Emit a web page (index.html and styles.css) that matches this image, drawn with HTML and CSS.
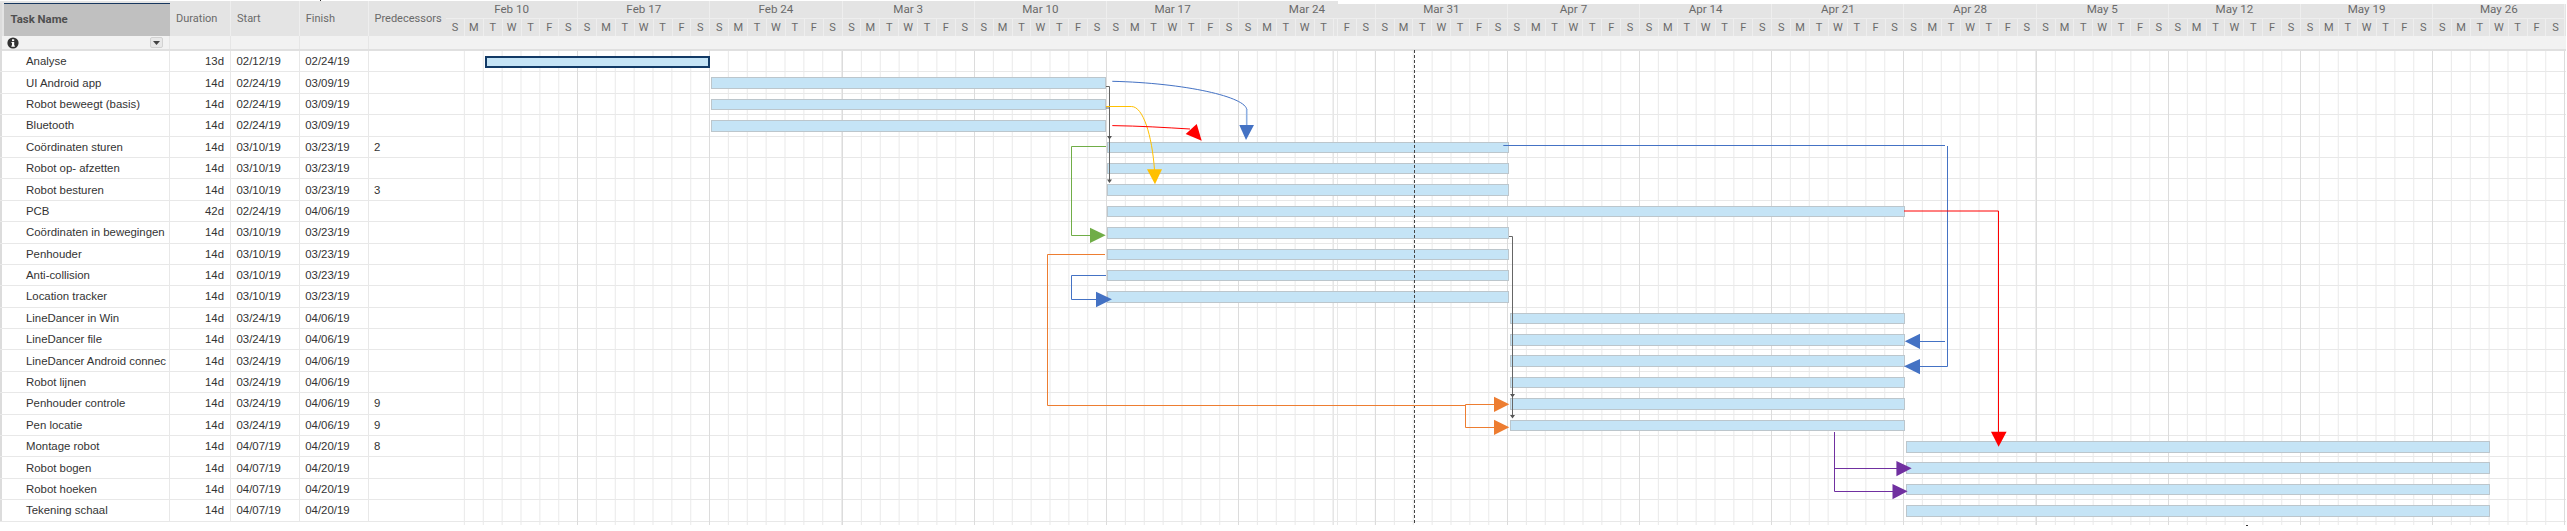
FILE: index.html
```html
<!DOCTYPE html>
<html lang="en">
<head>
<meta charset="utf-8">
<title>Gantt</title>
<link rel="stylesheet" href="styles.css">
</head>
<body>
<div class="gantt">
  <div class="head">
    <div class="hc c-task">Task Name</div>
    <div class="hc c-dur">Duration</div>
    <div class="hc c-date">Start</div>
    <div class="hc c-date">Finish</div>
    <div class="hc c-pred">Predecessors</div>
    <div class="weeks">
      <div class="week"><div class="month">Feb 10</div><div class="days"><span>S</span><span>M</span><span>T</span><span>W</span><span>T</span><span>F</span><span>S</span></div></div>
      <div class="week"><div class="month">Feb 17</div><div class="days"><span>S</span><span>M</span><span>T</span><span>W</span><span>T</span><span>F</span><span>S</span></div></div>
      <div class="week"><div class="month">Feb 24</div><div class="days"><span>S</span><span>M</span><span>T</span><span>W</span><span>T</span><span>F</span><span>S</span></div></div>
      <div class="week"><div class="month">Mar 3</div><div class="days"><span>S</span><span>M</span><span>T</span><span>W</span><span>T</span><span>F</span><span>S</span></div></div>
      <div class="week"><div class="month">Mar 10</div><div class="days"><span>S</span><span>M</span><span>T</span><span>W</span><span>T</span><span>F</span><span>S</span></div></div>
      <div class="week"><div class="month">Mar 17</div><div class="days"><span>S</span><span>M</span><span>T</span><span>W</span><span>T</span><span>F</span><span>S</span></div></div>
      <div class="week week-wide"><div class="month">Mar 24</div><div class="days"><span>S</span><span>M</span><span>T</span><span>W</span><span>T</span><span class="sliver"></span><span>F</span><span>S</span></div></div>
      <div class="week"><div class="month">Mar 31</div><div class="days"><span>S</span><span>M</span><span>T</span><span>W</span><span>T</span><span>F</span><span>S</span></div></div>
      <div class="week"><div class="month">Apr 7</div><div class="days"><span>S</span><span>M</span><span>T</span><span>W</span><span>T</span><span>F</span><span>S</span></div></div>
      <div class="week"><div class="month">Apr 14</div><div class="days"><span>S</span><span>M</span><span>T</span><span>W</span><span>T</span><span>F</span><span>S</span></div></div>
      <div class="week"><div class="month">Apr 21</div><div class="days"><span>S</span><span>M</span><span>T</span><span>W</span><span>T</span><span>F</span><span>S</span></div></div>
      <div class="week"><div class="month">Apr 28</div><div class="days"><span>S</span><span>M</span><span>T</span><span>W</span><span>T</span><span>F</span><span>S</span></div></div>
      <div class="week"><div class="month">May 5</div><div class="days"><span>S</span><span>M</span><span>T</span><span>W</span><span>T</span><span>F</span><span>S</span></div></div>
      <div class="week"><div class="month">May 12</div><div class="days"><span>S</span><span>M</span><span>T</span><span>W</span><span>T</span><span>F</span><span>S</span></div></div>
      <div class="week"><div class="month">May 19</div><div class="days"><span>S</span><span>M</span><span>T</span><span>W</span><span>T</span><span>F</span><span>S</span></div></div>
      <div class="week"><div class="month">May 26</div><div class="days"><span>S</span><span>M</span><span>T</span><span>W</span><span>T</span><span>F</span><span>S</span></div></div>
    </div>
  </div>
  <div class="top-mask"></div>

  <div class="filter">
    <div class="fc c-task">
      <svg class="info" width="12" height="12" viewBox="0 0 12 12"><circle cx="6" cy="6" r="5.6" fill="#333"/><rect x="5" y="5" width="2.2" height="4.4" fill="#fff"/><rect x="4.2" y="8.6" width="3.8" height="1" fill="#fff"/><rect x="4.4" y="5" width="1" height="0.9" fill="#fff"/><rect x="5" y="2.3" width="2.2" height="1.8" fill="#fff"/></svg>
      <span class="dd"><svg width="7" height="4" viewBox="0 0 7 4"><path d="M0 0H7L3.5 4Z" fill="#444"/></svg></span>
    </div>
    <div class="fc c-dur"></div>
    <div class="fc c-date"></div>
    <div class="fc c-date"></div>
    <div class="fc c-pred"></div>
  </div>

  <div class="rows">
    <div class="grid">
      <div class="gw"></div><div class="gw"></div><div class="gw"></div><div class="gw"></div><div class="gw"></div><div class="gw"></div>
      <div class="gw gw-a"></div><div class="gw gw-s"></div><div class="gw gw-b"></div>
      <div class="gw"></div><div class="gw"></div><div class="gw"></div><div class="gw"></div><div class="gw"></div><div class="gw"></div><div class="gw"></div><div class="gw"></div><div class="gw"></div>
    </div>

    <div class="row"><div class="cell c-task">Analyse</div><div class="cell c-dur">13d</div><div class="cell c-date">02/12/19</div><div class="cell c-date">02/24/19</div><div class="cell c-pred"></div><div class="track"><div class="bar bar-sel" style="left:38.7px;width:225.8px"></div></div></div>
    <div class="row"><div class="cell c-task">UI Android app</div><div class="cell c-dur">14d</div><div class="cell c-date">02/24/19</div><div class="cell c-date">03/09/19</div><div class="cell c-pred"></div><div class="track"><div class="bar" style="left:264.7px;width:395.5px"></div></div></div>
    <div class="row"><div class="cell c-task">Robot beweegt (basis)</div><div class="cell c-dur">14d</div><div class="cell c-date">02/24/19</div><div class="cell c-date">03/09/19</div><div class="cell c-pred"></div><div class="track"><div class="bar" style="left:264.7px;width:395.5px"></div></div></div>
    <div class="row"><div class="cell c-task">Bluetooth</div><div class="cell c-dur">14d</div><div class="cell c-date">02/24/19</div><div class="cell c-date">03/09/19</div><div class="cell c-pred"></div><div class="track"><div class="bar" style="left:264.7px;width:395.5px"></div></div></div>
    <div class="row"><div class="cell c-task">Coördinaten sturen</div><div class="cell c-dur">14d</div><div class="cell c-date">03/10/19</div><div class="cell c-date">03/23/19</div><div class="cell c-pred">2</div><div class="track"><div class="bar" style="left:660.5px;width:402.2px"></div></div></div>
    <div class="row"><div class="cell c-task">Robot op- afzetten</div><div class="cell c-dur">14d</div><div class="cell c-date">03/10/19</div><div class="cell c-date">03/23/19</div><div class="cell c-pred"></div><div class="track"><div class="bar" style="left:660.5px;width:402.2px"></div></div></div>
    <div class="row"><div class="cell c-task">Robot besturen</div><div class="cell c-dur">14d</div><div class="cell c-date">03/10/19</div><div class="cell c-date">03/23/19</div><div class="cell c-pred">3</div><div class="track"><div class="bar" style="left:660.5px;width:402.2px"></div></div></div>
    <div class="row"><div class="cell c-task">PCB</div><div class="cell c-dur">42d</div><div class="cell c-date">02/24/19</div><div class="cell c-date">04/06/19</div><div class="cell c-pred"></div><div class="track"><div class="bar" style="left:660.5px;width:798.3px"></div></div></div>
    <div class="row"><div class="cell c-task">Coördinaten in bewegingen</div><div class="cell c-dur">14d</div><div class="cell c-date">03/10/19</div><div class="cell c-date">03/23/19</div><div class="cell c-pred"></div><div class="track"><div class="bar" style="left:660.5px;width:402.2px"></div></div></div>
    <div class="row"><div class="cell c-task">Penhouder</div><div class="cell c-dur">14d</div><div class="cell c-date">03/10/19</div><div class="cell c-date">03/23/19</div><div class="cell c-pred"></div><div class="track"><div class="bar" style="left:660.5px;width:402.2px"></div></div></div>
    <div class="row"><div class="cell c-task">Anti-collision</div><div class="cell c-dur">14d</div><div class="cell c-date">03/10/19</div><div class="cell c-date">03/23/19</div><div class="cell c-pred"></div><div class="track"><div class="bar" style="left:660.5px;width:402.2px"></div></div></div>
    <div class="row"><div class="cell c-task">Location tracker</div><div class="cell c-dur">14d</div><div class="cell c-date">03/10/19</div><div class="cell c-date">03/23/19</div><div class="cell c-pred"></div><div class="track"><div class="bar" style="left:660.5px;width:402.2px"></div></div></div>
    <div class="row"><div class="cell c-task">LineDancer in Win</div><div class="cell c-dur">14d</div><div class="cell c-date">03/24/19</div><div class="cell c-date">04/06/19</div><div class="cell c-pred"></div><div class="track"><div class="bar" style="left:1063.5px;width:395.3px"></div></div></div>
    <div class="row"><div class="cell c-task">LineDancer file</div><div class="cell c-dur">14d</div><div class="cell c-date">03/24/19</div><div class="cell c-date">04/06/19</div><div class="cell c-pred"></div><div class="track"><div class="bar" style="left:1063.5px;width:395.3px"></div></div></div>
    <div class="row"><div class="cell c-task">LineDancer Android connec</div><div class="cell c-dur">14d</div><div class="cell c-date">03/24/19</div><div class="cell c-date">04/06/19</div><div class="cell c-pred"></div><div class="track"><div class="bar" style="left:1063.5px;width:395.3px"></div></div></div>
    <div class="row"><div class="cell c-task">Robot lijnen</div><div class="cell c-dur">14d</div><div class="cell c-date">03/24/19</div><div class="cell c-date">04/06/19</div><div class="cell c-pred"></div><div class="track"><div class="bar" style="left:1063.5px;width:395.3px"></div></div></div>
    <div class="row"><div class="cell c-task">Penhouder controle</div><div class="cell c-dur">14d</div><div class="cell c-date">03/24/19</div><div class="cell c-date">04/06/19</div><div class="cell c-pred">9</div><div class="track"><div class="bar" style="left:1063.5px;width:395.3px"></div></div></div>
    <div class="row"><div class="cell c-task">Pen locatie</div><div class="cell c-dur">14d</div><div class="cell c-date">03/24/19</div><div class="cell c-date">04/06/19</div><div class="cell c-pred">9</div><div class="track"><div class="bar" style="left:1063.5px;width:395.3px"></div></div></div>
    <div class="row"><div class="cell c-task">Montage robot</div><div class="cell c-dur">14d</div><div class="cell c-date">04/07/19</div><div class="cell c-date">04/20/19</div><div class="cell c-pred">8</div><div class="track"><div class="bar" style="left:1459.5px;width:584.5px"></div></div></div>
    <div class="row"><div class="cell c-task">Robot bogen</div><div class="cell c-dur">14d</div><div class="cell c-date">04/07/19</div><div class="cell c-date">04/20/19</div><div class="cell c-pred"></div><div class="track"><div class="bar" style="left:1459.5px;width:584.5px"></div></div></div>
    <div class="row"><div class="cell c-task">Robot hoeken</div><div class="cell c-dur">14d</div><div class="cell c-date">04/07/19</div><div class="cell c-date">04/20/19</div><div class="cell c-pred"></div><div class="track"><div class="bar" style="left:1459.5px;width:584.5px"></div></div></div>
    <div class="row"><div class="cell c-task">Tekening schaal</div><div class="cell c-dur">14d</div><div class="cell c-date">04/07/19</div><div class="cell c-date">04/20/19</div><div class="cell c-pred"></div><div class="track"><div class="bar" style="left:1459.5px;width:584.5px"></div></div></div>
  </div>

  <svg class="overlay" width="2567" height="531" viewBox="0 0 2567 531" fill="none">
    <path class="today" d="M1414.5 50V525"/>
    <path class="dep" d="M1106 86.5H1109.5V181.5M1106 108H1109.5"/>
    <path class="dep-fill" d="M1107 136H1112L1109.5 139.5ZM1107 179.5H1112L1109.5 183Z"/>
    <path class="dep" d="M1509 236.5H1512.5V416.5"/>
    <path class="dep-fill" d="M1510 394H1515L1512.5 397.5ZM1510 415H1515L1512.5 418.5Z"/>

    <path class="blue" d="M1112.3 81.3C1185 83 1247 97 1246.7 110"/>
    <path class="blue-soft" d="M1246.7 109V126"/>
    <path class="blue-f" d="M1239.3 125H1254L1246 140Z"/>

    <path class="yellow" d="M1106 106.5H1131.5C1143 106.5 1152 135 1154.5 170"/>
    <path class="yellow-f" d="M1147 169.3H1162L1155 184.3Z"/>

    <path class="red" d="M1112.3 125.6C1140 126 1165 127.5 1190 129"/>
    <path class="red-f" d="M1196.7 124L1201.7 140.7L1185.7 134Z"/>

    <path class="green" d="M1106 146.5H1071.5V235.5H1091"/>
    <path class="green-f" d="M1090 227.7V243L1105.7 235.3Z"/>

    <path class="blue" d="M1106 275.5H1071.5V299.5H1097"/>
    <path class="blue-f" d="M1096 291.7V307.3L1112 299.3Z"/>

    <path class="blue" d="M1503.3 145.5H1945M1947.5 146V366.5H1919M1945 341.5H1919"/>
    <path class="blue-f" d="M1920 359V374.3L1904 366.3ZM1920 333.7V349L1904.8 341.3Z"/>

    <path class="red" d="M1904 211H1998.5V432"/>
    <path class="red-f" d="M1991 431.7H2006.6L1998.6 446.7Z"/>

    <path class="orange" d="M1105 254.5H1047.5V405.5H1466M1465.5 404.5H1495M1465.5 404.5V427.5H1495"/>
    <path class="orange-f" d="M1494 396.7V412L1509.3 404.3ZM1494 419.7V435L1509.3 427.3Z"/>

    <path class="purple" d="M1834.5 432V491.5H1893M1834.5 468.5H1897"/>
    <path class="purple-f" d="M1896.4 461V476.3L1911.7 468.3ZM1892.5 484V499.3L1907.6 491.3Z"/>

    <path class="dot" d="M2246 525h2v1h-2ZM320 0h1v1h-1Z"/>
  </svg>
</div>
</body>
</html>
```
FILE: styles.css
```css
* { box-sizing: border-box; }

html, body { margin: 0; padding: 0; background: #fff; }

body {
  width: 2567px;
  height: 531px;
  overflow: hidden;
  font-family: "Liberation Sans", Arial, sans-serif;
}

.gantt {
  position: relative;
  width: 2567px;
  height: 531px;
  padding-top: 1px;
}

.gantt::before {
  content: "";
  position: absolute;
  left: 0;
  top: 3px;
  bottom: 9px;
  width: 2px;
  background: #dcdcdc;
}

/* shared column widths */
.c-task { width: 170px; flex: none; }
.c-dur { width: 61px; flex: none; }
.c-date { width: 68.75px; flex: none; }
.c-pred { width: 77.5px; flex: none; }

/* header */
.head {
  display: flex;
  height: 35px;
  width: 2566px;
  background: #e4e4e4;
  font-family: Roboto, "Liberation Sans", sans-serif;
  font-size: 11px;
  color: #6a6a6a;
}

.hc {
  display: flex;
  align-items: center;
  padding: 0 0 0 6px;
  border-right: 1px solid #eee;
}

.hc.c-task {
  margin-left: 3.5px;
  width: 166.5px;
  margin-top: 1.5px;
  height: 33.5px;
  padding-left: 7px;
  padding-bottom: 1px;
  background: #c0c0c0;
  border-top: 1px solid #17375e;
  border-right: 0;
  font-size: 11.4px;
  font-weight: 700;
  color: #4f4f4f;
}

.hc.c-pred { border-right: 0; }

.weeks { display: flex; flex: 1; min-width: 0; }

.week {
  flex: none;
  width: 132.2px;
  display: flex;
  flex-direction: column;
}

.week-wide { width: 136.6px; }

.month {
  height: 17.7px;
  display: flex;
  align-items: center;
  justify-content: center;
  border-right: 1px solid #eee;
  border-bottom: 1px solid #eee;
  font-size: 11.6px;
}

.days { display: flex; flex: 1; }

.days span {
  flex: 0 0 18.886px;
  display: flex;
  align-items: center;
  justify-content: center;
  border-right: 1px solid #eee;
  font-size: 11px;
}

.days .sliver { flex-basis: 4.4px; }

.top-mask {
  position: absolute;
  left: 1338px;
  top: 0;
  width: 1229px;
  height: 4px;
  background: #fff;
}

/* filter row */
.filter {
  display: flex;
  height: 15px;
  width: 2566px;
  background: #f2f2f2;
  border-bottom: 2px solid #e0e0e0;
}

.fc { border-right: 1px solid #e6e6e6; }
.fc.c-pred { border-right: 0; }

.fc.c-task {
  display: flex;
  align-items: center;
  justify-content: space-between;
  padding: 0 6px 0 7px;
}

.info { flex: none; }

.dd {
  width: 13px;
  height: 11px;
  display: flex;
  align-items: center;
  justify-content: center;
  background: #e8e8e8;
  border: 1px solid #d2d2d2;
  border-radius: 2px;
}

/* body rows */
.rows { position: relative; width: 2566px; }

.grid {
  position: absolute;
  left: 446px;
  top: 0;
  bottom: -3px;
  display: flex;
}

.gw {
  flex: none;
  width: 132.2px;
  border-right: 1px solid #dcdcdc;
  background-image: linear-gradient(to left, #e9e9e9 1px, transparent 1px);
  background-size: 18.886px 100%;
}

.gw-a { width: 94.4px; border-right: 1px solid #e6e6e6; }
.gw-s { width: 4.4px; border-right: 1px solid #e9e9e9; background: none; }
.gw-b { width: 37.8px; }

.row {
  display: flex;
  height: 21.4px;
  border-bottom: 1px solid #e8e8e8;
  font-size: 11.4px;
  color: #333;
}

.cell {
  display: flex;
  align-items: center;
  padding: 0 0 0 5.5px;
  border-right: 1px solid #e8e8e8;
  white-space: nowrap;
  overflow: hidden;
}

.cell.c-task { padding-left: 26px; }
.cell.c-dur { justify-content: flex-end; padding: 0 6px 0 0; }
.cell.c-pred { border-right: 0; }

.track { position: relative; flex: 1; min-width: 0; }

.bar {
  position: absolute;
  top: 5px;
  height: 11.5px;
  background: #c5e4f6;
  border: 1px solid #bcc6cc;
}

.bar-sel { border: 2px solid #123a66; top: 5px; }

/* dependency arrows and today line */
.overlay { position: absolute; left: 0; top: 0; pointer-events: none; }

.today { stroke: #444; stroke-width: 1; stroke-dasharray: 3 2; }
.dep { stroke: #666; stroke-width: 1; }
.dep-fill { fill: #555; }
.blue { stroke: #4472c4; stroke-width: 1; }
.blue-soft { stroke: #8fb0e2; stroke-width: 1.6; }
.blue-f { fill: #4472c4; }
.yellow { stroke: #ffc000; stroke-width: 1; }
.yellow-f { fill: #ffc000; }
.red { stroke: #ff0000; stroke-width: 1; }
.red-f { fill: #ff0000; }
.green { stroke: #70ad47; stroke-width: 1; }
.green-f { fill: #70ad47; }
.orange { stroke: #ed7d31; stroke-width: 1; }
.orange-f { fill: #ed7d31; }
.purple { stroke: #7030a0; stroke-width: 1; }
.purple-f { fill: #7030a0; }
.dot { fill: #333; }
```
